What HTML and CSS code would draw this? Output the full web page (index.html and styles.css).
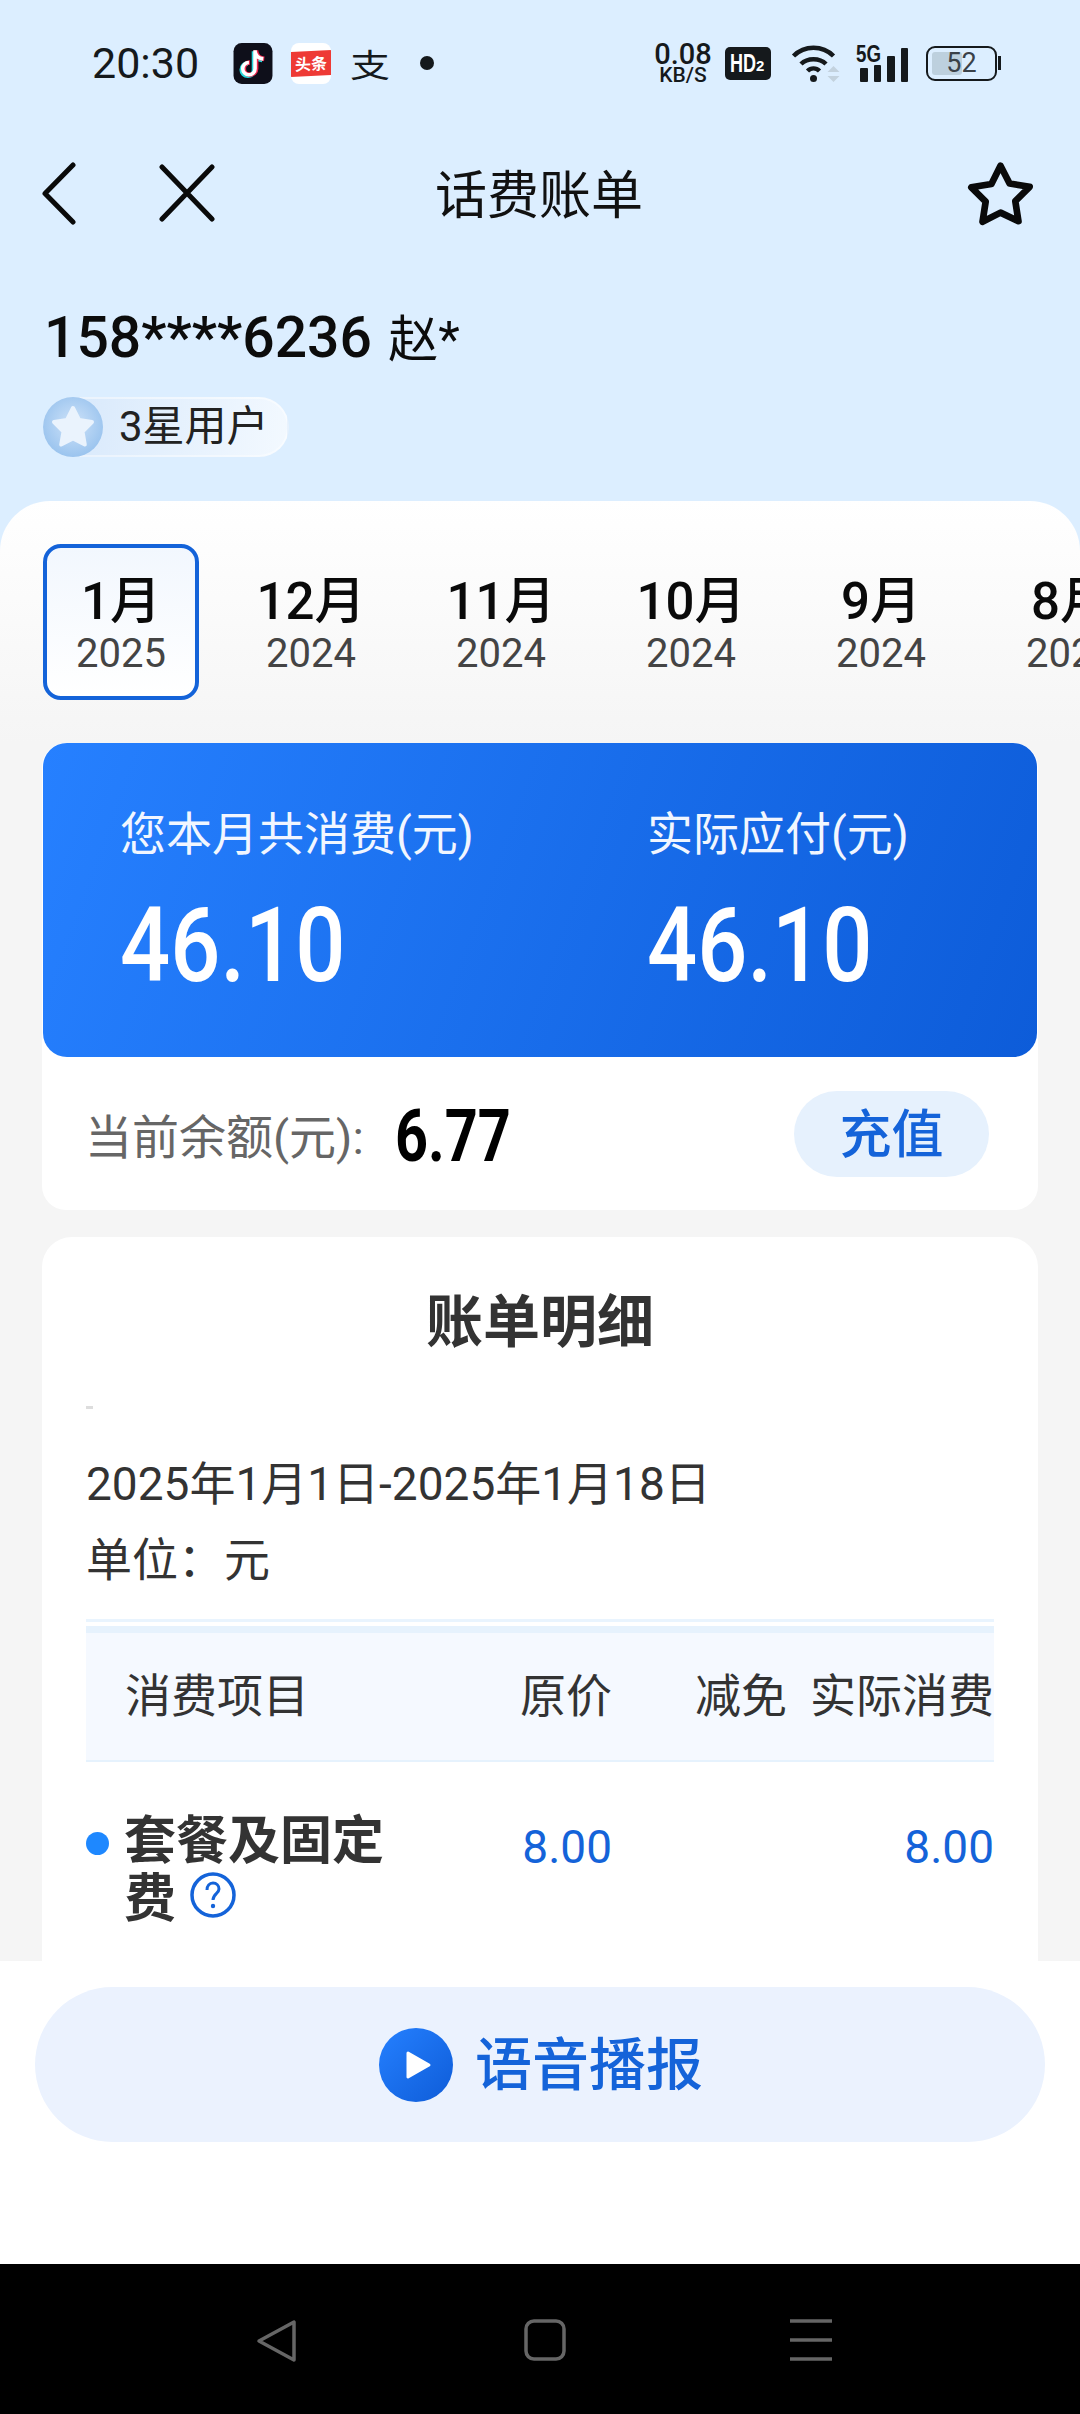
FILE: index.html
```html
<!DOCTYPE html>
<html>
  <head>
    <title>话费账单</title>
    <meta charset="utf-8" />
    <link rel="stylesheet" href="styles.css">
  </head>
  <body>
    <div class="screen">
      <div class="scroll">
        <header class="top">
          <div class="status">
            <span class="time">20:30</span>
            <svg class="app-icon" viewBox="0 0 38 40">
              <rect width="38" height="40" rx="8" fill="#0e0f1a" />
              <path d="M21 7v18a6 6 0 1 1-6-6M21 8c.5 4.500 3.500 7 8 7.500" fill="none" stroke="#25d7dc" stroke-width="4.500" transform="translate(-1 1)" />
              <path d="M21 7v18a6 6 0 1 1-6-6M21 8c.5 4.500 3.500 7 8 7.500" fill="none" stroke="#f0294f" stroke-width="4.500" transform="translate(1 0)" />
              <path d="M21 7v18a6 6 0 1 1-6-6M21 8c.5 4.500 3.500 7 8 7.500" fill="none" stroke="#fff" stroke-width="3.500" />
            </svg>
            <div class="toutiao"><span>头条</span></div>
            <span class="zhi">支</span>
            <span class="status-dot"></span>
            <div class="status-right">
              <div class="speed"><b>0.08</b><i>KB/S</i></div>
              <div class="hd"><span>HD</span><small>2</small></div>
              <svg class="wifi" viewBox="0 0 48 39">
                <path d="M2 12C13 1 31 1 42 12M9.500 20C16 13.500 28 13.500 34.500 20M16 27c3.500-3.500 8.500-3.500 12 0" fill="none" stroke="#15191c" stroke-width="4.500" />
                <circle cx="22" cy="34.500" r="3.500" fill="#15191c" />
                <path d="M42 22l6 6H36zM36 32h12l-6 6z" fill="#c3d2de" />
              </svg>
              <div class="signal">
                <span class="five-g">5G</span>
                <div class="bars">
                  <span class="b1"></span><span class="b2"></span><span class="b3"></span><span class="b4"></span>
                </div>
              </div>
              <div class="battery">
                <div class="battery-body"><span class="battery-fill"></span><span class="battery-num">52</span></div>
                <span class="battery-nub"></span>
              </div>
            </div>
          </div>

          <div class="toolbar">
            <div class="toolbar-side">
              <svg class="ic-back" viewBox="0 0 34 63">
                <path d="M31 3L3 31.500 31 60" fill="none" stroke="#0a0a0a" stroke-width="5" stroke-linecap="round" stroke-linejoin="round" />
              </svg>
              <svg class="ic-close" viewBox="0 0 56 58">
                <path d="M3 3l50 52M53 3L3 55" fill="none" stroke="#0a0a0a" stroke-width="5" stroke-linecap="round" />
              </svg>
            </div>
            <h1 class="page-title">话费账单</h1>
            <div class="toolbar-side right">
              <svg class="ic-star" viewBox="0 0 70 68">
                <path d="M35 5l9.500 18.500 21 3.500-15 15 3.300 21L35 54l-18.800 9.500 3.300-21-15-15 21-3.500z" fill="none" stroke="#0a0a0a" stroke-width="7" stroke-linejoin="round" />
              </svg>
            </div>
          </div>

          <div class="user-name"><b>158****6236</b> 赵*</div>
          <div class="user-badge">
            <span class="badge-star">
              <svg viewBox="0 0 60 60">
                <path d="M30 11l6 12 13 2-9.500 9.500 2.300 13L30 41.500 18.200 47.500l2.300-13L11 25l13-2z" fill="#eaf3fd" stroke="#eaf3fd" stroke-width="4" stroke-linejoin="round" />
              </svg>
            </span>
            <span class="badge-text">3星用户</span>
          </div>
        </header>

        <main class="sheet">
          <div class="months">
            <div class="month active"><b>1月</b><span>2025</span></div>
            <div class="month"><b>12月</b><span>2024</span></div>
            <div class="month"><b>11月</b><span>2024</span></div>
            <div class="month"><b>10月</b><span>2024</span></div>
            <div class="month"><b>9月</b><span>2024</span></div>
            <div class="month"><b>8月</b><span>2024</span></div>
          </div>

          <section class="summary">
            <div class="summary-blue">
              <div class="summary-col">
                <div class="summary-label">您本月共消费(元)</div>
                <div class="summary-value">46.10</div>
              </div>
              <div class="summary-col">
                <div class="summary-label">实际应付(元)</div>
                <div class="summary-value">46.10</div>
              </div>
            </div>
            <div class="balance">
              <span class="balance-label">当前余额(元):</span>
              <span class="balance-value">6.77</span>
              <span class="recharge">充值</span>
            </div>
          </section>

          <section class="detail">
            <h2 class="detail-title">账单明细</h2>
            <div class="tiny-dash"></div>
            <p class="detail-line">2025年1月1日-2025年1月18日</p>
            <p class="detail-line unit">单位：元</p>
            <div class="strip-thin"></div>
            <div class="table-head">
              <span>消费项目</span>
              <span class="num">原价</span>
              <span class="num">减免</span>
              <span class="num">实际消费</span>
            </div>
            <div class="table-row">
              <div class="row-name">
                <span class="row-dot"></span>
                <b>套餐及固定费<svg class="ic-help" viewBox="0 0 46 46">
                  <circle cx="23" cy="23" r="21" fill="none" stroke="#1463d9" stroke-width="3.500" />
                  <path d="M17 18c0-4 2.500-7 6-7s6 2.500 6 6c0 4.500-6 5-6 11" fill="none" stroke="#1463d9" stroke-width="3" />
                  <circle cx="23" cy="34" r="2.200" fill="#1463d9" />
                </svg></b>
              </div>
              <span class="num money">8.00</span>
              <span class="num money"></span>
              <span class="num money">8.00</span>
            </div>
          </section>
        </main>
      </div>

      <div class="footer">
        <div class="voice">
          <svg class="ic-play" viewBox="0 0 74 74">
            <defs>
              <linearGradient id="playFill" x1="0" y1="0" x2="1" y2="1">
                <stop offset="0" stop-color="#2580ff" />
                <stop offset="1" stop-color="#0e5cd8" />
              </linearGradient>
            </defs>
            <circle cx="37" cy="37" r="37" fill="url(#playFill)" />
            <path d="M29 25l21 12-21 12z" fill="#fff" stroke="#fff" stroke-width="3" stroke-linejoin="round" />
          </svg>
          <span class="voice-text">语音播报</span>
        </div>
      </div>

      <nav class="navbar">
        <svg class="nav-back" viewBox="0 0 42 44">
          <path d="M38 3v38L3 22z" fill="none" stroke="#666" stroke-width="3.500" stroke-linejoin="round" />
        </svg>
        <svg class="nav-home" viewBox="0 0 42 42">
          <rect x="2" y="2" width="38" height="38" rx="8" fill="none" stroke="#666" stroke-width="3.500" />
        </svg>
        <svg class="nav-menu" viewBox="0 0 42 42">
          <path d="M0 2h42M0 21h42M0 40h42" stroke="#666" stroke-width="3.500" />
        </svg>
      </nav>
    </div>
  </body>
</html>
```

FILE: styles.css
```css
* {
  box-sizing: border-box;
}
body {
  margin: 0;
  font-family: "Noto Sans CJK SC", Roboto, sans-serif;
  background: #000;
}
h1,
h2,
p {
  margin: 0;
  font-weight: normal;
}
.screen {
  width: 1080px;
  height: 2414px;
  display: flex;
  flex-direction: column;
  overflow: hidden;
}
.scroll {
  height: 1961px;
  overflow: hidden;
  background: #dceeff;
}

/* status bar */
.top {
  height: 501px;
  padding-left: 42px;
}
.status {
  height: 126px;
  margin-left: -42px;
  padding: 0 79px 0 92px;
  display: flex;
  align-items: center;
  color: #15191c;
}
.time {
  width: 141px;
  font-family: Roboto, sans-serif;
  font-size: 43px;
}
.app-icon {
  width: 40px;
  height: 41px;
}
.toutiao {
  width: 40px;
  height: 41px;
  margin-left: 18px;
  border-radius: 8px;
  background: #fff;
  display: flex;
  align-items: center;
  overflow: hidden;
}
.toutiao span {
  display: block;
  width: 100%;
  height: 25px;
  background: #ee3a35;
  color: #fff;
  font-size: 16px;
  font-weight: 700;
  line-height: 25px;
  text-align: center;
  transform: skewY(-3deg);
}
.zhi {
  width: 38px;
  margin-left: 20px;
  font-size: 32px;
  line-height: 40px;
  text-align: center;
  transform: scaleX(1.25);
}
.status-dot {
  width: 14px;
  height: 14px;
  margin-left: 31px;
  border-radius: 50%;
  background: #15191c;
}
.status-right {
  margin-left: auto;
  display: flex;
  align-items: center;
}
.speed {
  width: 58px;
  display: flex;
  flex-direction: column;
  align-items: center;
  font-family: Roboto, sans-serif;
}
.speed b {
  font-size: 29px;
  font-weight: 500;
  line-height: 23px;
}
.speed i {
  font-size: 21px;
  font-style: normal;
  font-weight: 500;
  line-height: 18px;
}
.hd {
  width: 46px;
  height: 33px;
  margin-left: 13px;
  padding-left: 5px;
  border-radius: 5px;
  background: #15191c;
  color: #fff;
  font-family: "Liberation Sans", sans-serif;
  font-weight: 700;
  display: flex;
  align-items: center;
}
.hd span {
  width: 26px;
  font-size: 25px;
  transform: scaleX(0.72);
  transform-origin: left;
}
.hd small {
  font-size: 15px;
  margin-top: 5px;
}
.wifi {
  width: 49px;
  height: 39px;
  margin-left: 20px;
}
.signal {
  width: 52px;
  height: 37px;
  margin-left: 16px;
  position: relative;
  display: flex;
  align-items: flex-end;
  justify-content: flex-end;
}
.five-g {
  position: absolute;
  top: -5px;
  left: 0;
  font-family: "Liberation Sans", sans-serif;
  font-size: 24px;
  font-weight: 700;
  transform: scaleX(0.78);
  transform-origin: left;
}
.bars {
  display: flex;
  align-items: flex-end;
  gap: 6px;
}
.bars span {
  width: 7.500px;
  border-radius: 1px;
  background: #15191c;
}
.b1 {
  height: 14px;
}
.b2 {
  height: 17px;
}
.b3 {
  height: 26px;
}
.b4 {
  height: 34px;
}
.battery {
  margin-left: 18px;
  display: flex;
  align-items: center;
}
.battery-body {
  width: 71px;
  height: 35px;
  padding: 4px;
  border: 2.500px solid #15191c;
  border-radius: 9px;
  position: relative;
}
.battery-fill {
  display: block;
  width: 50%;
  height: 100%;
  border-radius: 3px;
  background: #bdd0de;
}
.battery-num {
  position: absolute;
  top: 0;
  left: 0;
  right: 0;
  font-family: Roboto, sans-serif;
  font-size: 27px;
  line-height: 31px;
  text-align: center;
  color: #3a4148;
}
.battery-nub {
  width: 3px;
  height: 14px;
  margin-left: 1px;
  background: #15191c;
}

/* toolbar */
.toolbar {
  height: 134px;
  margin-left: -42px;
  padding: 0 46px 0 42px;
  display: flex;
  align-items: center;
}
.toolbar-side {
  flex: 1;
  display: flex;
  align-items: center;
}
.toolbar-side.right {
  justify-content: flex-end;
}
.ic-back {
  width: 34px;
  height: 63px;
}
.ic-close {
  width: 56px;
  height: 58px;
  margin-left: 83px;
}
.page-title {
  margin: -4px 0 0 2px;
  font-size: 52px;
  color: #111;
}
.ic-star {
  width: 67px;
  height: 65px;
}

/* user */
.user-name {
  height: 64px;
  margin: 46px 0 0 2px;
  font-family: Roboto, "Noto Sans CJK SC", sans-serif;
  font-size: 50px;
  line-height: 64px;
  color: #0c0c0c;
}
.user-name b {
  margin-right: 4px;
  font-size: 57px;
  font-weight: 500;
}
.user-badge {
  width: 246px;
  height: 60px;
  margin: 27px 0 0 1px;
  border-radius: 30px;
  border: 2px solid rgba(255, 255, 255, 0.45);
  background: linear-gradient(100deg, #d5e7fb, #f3f9ff);
  display: flex;
  align-items: center;
}
.badge-star {
  width: 60px;
  height: 60px;
  margin-left: -2px;
  flex: none;
  border-radius: 50%;
  background: radial-gradient(circle at 50% 45%, #cfe3f9, #8fbdec 90%);
}
.badge-star svg {
  display: block;
  width: 60px;
  height: 60px;
}
.badge-text {
  margin-left: 16px;
  font-family: Roboto, "Noto Sans CJK SC", sans-serif;
  font-size: 42px;
  line-height: 54px;
  color: #222;
}

/* sheet */
.sheet {
  height: 1460px;
  padding: 43px 42px 0;
  border-radius: 50px 50px 0 0;
  background: linear-gradient(#fff, #f5f5f5 242px);
}
.months {
  height: 156px;
  margin: 0 -42px 0 1px;
  display: flex;
  gap: 34px;
  overflow: hidden;
}
.month {
  width: 156px;
  flex: none;
  padding-top: 25px;
  border: 4px solid transparent;
  border-radius: 18px;
  display: flex;
  flex-direction: column;
  align-items: center;
  font-family: Roboto, "Noto Sans CJK SC", sans-serif;
}
.month.active {
  border-color: #1463d9;
  background: linear-gradient(#f2f7fe, #fff);
}
.month b {
  font-size: 51px;
  font-weight: 500;
  line-height: 58px;
  color: #0a0a0a;
}
.month span {
  font-size: 40px;
  line-height: 46px;
  color: #444;
}

/* summary card */
.summary {
  margin-top: 43px;
  height: 467px;
  border-radius: 24px;
  background: #fff;
}
.summary-blue {
  height: 314px;
  margin: 0 1px;
  padding: 60px 0 0 77px;
  border-radius: 24px;
  background: linear-gradient(110deg, #2680ff, #0d5cd9);
  color: #fff;
  display: flex;
}
.summary-col {
  width: 527px;
  flex: none;
}
.summary-col:last-child {
  width: 389px;
}
.summary-label {
  font-family: Roboto, "Noto Sans CJK SC", sans-serif;
  font-size: 46px;
  line-height: 62px;
  color: #f1f6ff;
}
.summary-value {
  margin-top: 26px;
  font-family: Roboto, sans-serif;
  font-size: 104px;
  font-weight: 500;
  line-height: 110px;
  transform: scaleX(0.85);
  transform-origin: left;
}
.balance {
  height: 153px;
  padding: 0 49px 0 43px;
  display: flex;
  align-items: center;
}
.balance-label {
  font-family: Roboto, "Noto Sans CJK SC", sans-serif;
  font-size: 47px;
  color: #666;
}
.balance-value {
  margin: 6px 0 0 31px;
  font-family: Roboto, sans-serif;
  font-size: 72px;
  font-weight: 700;
  color: #000;
  transform: scaleX(0.8);
  transform-origin: left;
}
.recharge {
  width: 195px;
  height: 86px;
  margin-left: auto;
  border-radius: 43px;
  background: #e6f1fd;
  color: #1463d9;
  font-size: 52px;
  font-weight: 500;
  line-height: 80px;
  text-align: center;
}

/* detail card */
.detail {
  margin-top: 27px;
  height: 900px;
  padding: 0 44px;
  border-radius: 30px 30px 0 0;
  background: #fff;
}
.detail-title {
  padding-top: 43px;
  font-size: 57px;
  font-weight: 700;
  line-height: 74px;
  text-align: center;
  color: #333;
}
.tiny-dash {
  width: 7px;
  height: 3px;
  margin-top: 52px;
  background: #ddd;
}
.detail-line {
  margin-top: 37px;
  font-family: Roboto, "Noto Sans CJK SC", sans-serif;
  font-size: 46px;
  line-height: 76px;
  color: #333;
}
.detail-line.unit {
  margin-top: 0;
}
.strip-thin {
  height: 3px;
  margin-top: 21px;
  background: #e9f4fe;
}
.table-head,
.table-row {
  display: grid;
  grid-template-columns: 340px 186px 175px 207px;
}
.table-head {
  height: 136px;
  margin-top: 4px;
  padding-bottom: 9px;
  border-top: 7px solid #e6f2fd;
  border-bottom: 2px solid #e6f2fd;
  background: #f5f9ff;
  align-items: center;
  font-size: 46px;
  color: #333;
}
.table-head span:first-child {
  padding-left: 39px;
}
.num {
  text-align: right;
  white-space: nowrap;
}
.table-row {
  margin-top: 29px;
  align-items: start;
}
.row-name {
  display: flex;
  align-items: flex-start;
}
.row-dot {
  width: 23px;
  height: 23px;
  margin: 41px 15px 0 0;
  flex: none;
  border-radius: 50%;
  background: #1e88ff;
}
.row-name b {
  width: 270px;
  margin-top: 17px;
  font-size: 52px;
  font-weight: 700;
  line-height: 58px;
  color: #333;
}
.ic-help {
  width: 46px;
  height: 46px;
  margin-left: 14px;
  vertical-align: -1px;
}
.money {
  margin-top: 26px;
  font-family: Roboto, sans-serif;
  font-size: 46px;
  line-height: 60px;
  color: #1463d9;
}

/* voice button */
.footer {
  height: 303px;
  padding: 26px 35px 0;
  background: #fff;
}
.voice {
  height: 155px;
  border-radius: 78px;
  background: #ebf2fe;
  display: flex;
  align-items: center;
  justify-content: center;
  gap: 22px;
  color: #1463d9;
  font-size: 57px;
  font-weight: 500;
}
.voice-text {
  margin-bottom: 10px;
}
.ic-play {
  width: 74px;
  height: 74px;
  margin-left: 2px;
}

/* android nav */
.navbar {
  height: 150px;
  padding: 55px 0 0 256px;
  background: #000;
  display: flex;
  align-items: flex-start;
}
.navbar svg {
  display: block;
}
.nav-back {
  width: 42px;
  height: 44px;
}
.nav-home {
  width: 42px;
  height: 42px;
  margin-left: 226px;
}
.nav-menu {
  width: 42px;
  height: 42px;
  margin-left: 224px;
}
```
